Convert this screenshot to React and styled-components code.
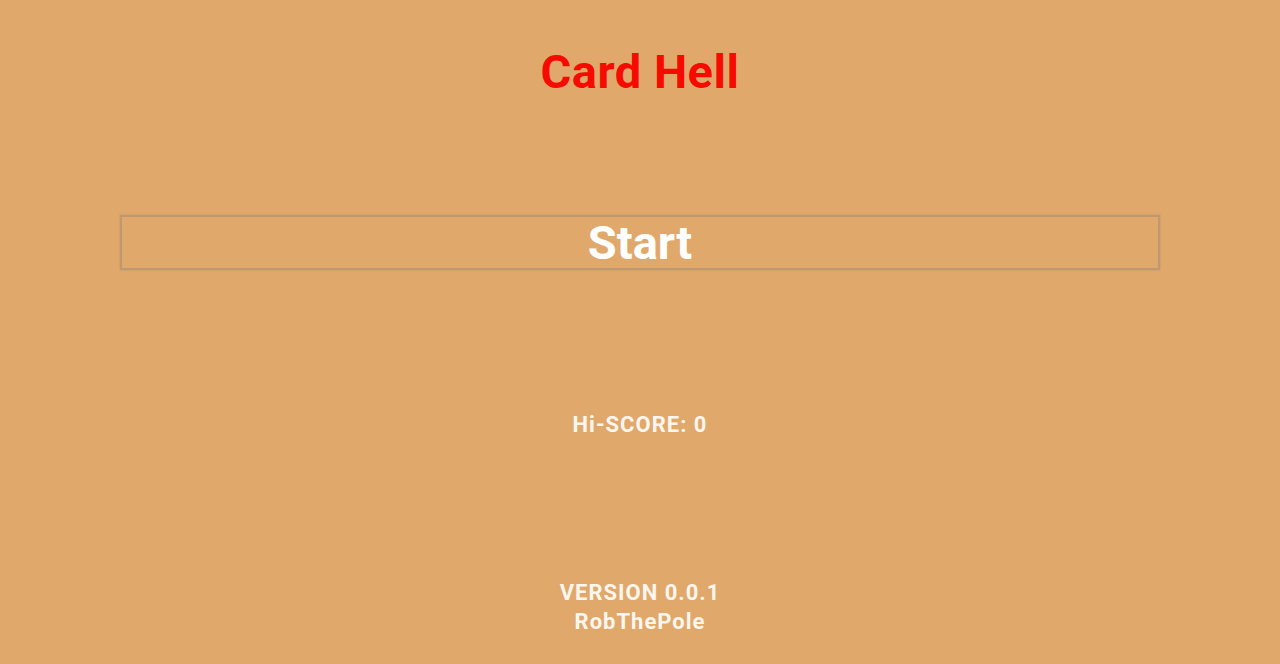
import React from 'react';
import styled, { createGlobalStyle } from 'styled-components';

const GlobalStyle = createGlobalStyle`
  html, body {
    margin: 0;
    padding: 0;
    background-color: #e0a86b;
  }
  body {
    font-family: Roboto, "Liberation Sans", sans-serif;
  }
`;

const Screen = styled.div`
  min-height: 664px;
  display: flex;
  flex-direction: column;
  align-items: center;
  padding-top: 44px;
  box-sizing: border-box;
  background-color: #e0a86b;
`;

const Title = styled.h1`
  margin: 0;
  font-size: 47px;
  line-height: 56px;
  font-weight: 700;
  letter-spacing: 0.5px;
  color: #f70a00;
`;

const StartButton = styled.button`
  margin-top: 115px;
  width: 1040px;
  height: 55px;
  box-sizing: border-box;
  background: transparent;
  border: 2px solid rgba(140, 130, 120, 0.4);
  box-shadow: 0 0 2px rgba(120, 110, 100, 0.3);
  font-family: Roboto, "Liberation Sans", sans-serif;
  font-size: 47px;
  font-weight: 700;
  line-height: 51px;
  color: #ffffff;
  cursor: pointer;
  padding: 0;
`;

const InfoText = styled.div`
  margin-top: ${p => p.$gap}px;
  font-size: 22px;
  line-height: 29px;
  font-weight: 700;
  letter-spacing: 1px;
  color: #fdf6ee;
  text-align: center;
`;

export default function App() {
  return (
    <>
      <GlobalStyle />
      <Screen>
        <Title>Card Hell</Title>
        <StartButton>Start</StartButton>
        <InfoText $gap={140}>Hi-SCORE: 0</InfoText>
        <InfoText $gap={139}>
          VERSION 0.0.1
          <br />
          RobThePole
        </InfoText>
      </Screen>
    </>
  );
}
